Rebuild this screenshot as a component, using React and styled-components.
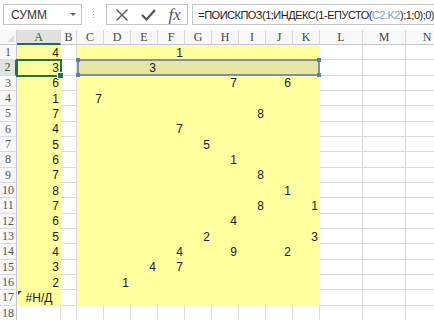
import React from "react";
import styled, { createGlobalStyle } from "styled-components";

const GlobalStyle = createGlobalStyle`
  html, body {
    margin: 0;
    padding: 0;
    background: #ffffff;
    overflow: hidden;
  }
  body {
    font-family: "Liberation Sans", Arial, sans-serif;
  }
`;

const YELLOW = "#ffff9e";
const RANGE = "#e6e6a2";
const GRID = "#dadada";
const GREEN = "#217346";

const Window = styled.div`
  width: 434px;
  height: 320px;
  overflow: hidden;
  background: #fff;
`;

const Toolbar = styled.div`
  height: 30px;
  display: flex;
  align-items: flex-start;
  padding: 4px 0 0 3px;
  box-sizing: border-box;
`;

const NameBox = styled.div`
  width: 79px;
  height: 21px;
  box-sizing: border-box;
  border: 1px solid #c6c6c6;
  display: flex;
  align-items: center;
  justify-content: space-between;
  padding: 0 5px 0 7px;
  font-size: 12px;
  color: #333;
`;

const Caret = styled.span`
  width: 0;
  height: 0;
  border-left: 3px solid transparent;
  border-right: 3px solid transparent;
  border-top: 3px solid #666;
`;

const Grip = styled.div`
  width: 24px;
  height: 21px;
  display: flex;
  flex-direction: column;
  align-items: center;
  justify-content: center;
  gap: 2px;

  span {
    width: 1px;
    height: 1px;
    background: #9a9a9a;
  }
`;

const FxGroup = styled.div`
  width: 83px;
  height: 21px;
  box-sizing: border-box;
  border: 1px solid #c6c6c6;
  display: flex;
  align-items: center;
  padding-left: 8px;
  gap: 12px;
`;

const FxLabel = styled.span`
  font-family: "Liberation Serif", "DejaVu Serif", serif;
  font-style: italic;
  font-size: 17px;
  color: #555;
  line-height: 1;
  margin-left: 1px;
`;

const FormulaBox = styled.div`
  flex: 1;
  height: 21px;
  margin-left: 4px;
  box-sizing: border-box;
  border: 1px solid #c6c6c6;
  border-right: none;
  display: flex;
  align-items: center;
  padding-left: 5px;
  font-size: 11px;
  letter-spacing: -0.5px;
  color: #222;
  white-space: nowrap;
`;

const Ref = styled.span`
  color: #7f9fd2;
`;

const Sheet = styled.div`
  display: grid;
  grid-template-columns: 17px 44px 16px repeat(9, 27px) 43px 43px 43px;
  grid-template-rows: 15px repeat(18, 15.333px);
  position: relative;
`;

const Corner = styled.div`
  box-sizing: border-box;
  background: #f8f8f8;
  border-right: 1px solid #d4d4d4;
  border-bottom: 1px solid #c6c6c6;
  position: relative;

  &::after {
    content: "";
    position: absolute;
    right: 2px;
    bottom: 2px;
    border-left: 7px solid transparent;
    border-bottom: 7px solid #dcdcdc;
  }
`;

const ColHead = styled.div`
  box-sizing: border-box;
  background: ${(p) => (p.$active ? "#e1e1e1" : "#f8f8f8")};
  border-right: 1px solid #dadada;
  border-bottom: ${(p) => (p.$active ? `2px solid ${GREEN}` : "1px solid #c6c6c6")};
  font-family: "Liberation Serif", "DejaVu Serif", serif;
  font-size: 12px;
  color: ${(p) => (p.$active ? "#1e5c3a" : "#444")};
  display: flex;
  align-items: center;
  justify-content: center;
  line-height: 1;
`;

const RowHead = styled.div`
  box-sizing: border-box;
  background: ${(p) => (p.$active ? "#e1e1e1" : "#f8f8f8")};
  border-right: ${(p) => (p.$active ? `2px solid ${GREEN}` : "1px solid #c6c6c6")};
  border-bottom: 1px solid #dadada;
  font-family: "Liberation Serif", "DejaVu Serif", serif;
  font-size: 12px;
  color: ${(p) => (p.$active ? "#1e5c3a" : "#555")};
  display: flex;
  align-items: center;
  justify-content: center;
  line-height: 1;
`;

const fills = { yellow: YELLOW, range: RANGE, white: "#ffffff" };

const Cell = styled.div`
  box-sizing: border-box;
  background: ${(p) => fills[p.$fill]};
  border-right: ${(p) => (p.$fill === "white" ? `1px solid ${GRID}` : "none")};
  border-bottom: ${(p) => (p.$fill === "white" ? `1px solid ${GRID}` : "none")};
  display: flex;
  align-items: center;
  justify-content: ${(p) => (p.$center ? "center" : "flex-end")};
  padding-right: ${(p) => (p.$center ? "0" : "2px")};
  font-size: 12px;
  color: #1a1a1a;
  line-height: 1;
  position: relative;
`;

const ErrorMark = styled.span`
  position: absolute;
  left: 1px;
  top: 1px;
  border-top: 4px solid #1e7145;
  border-right: 4px solid transparent;
`;

const ActiveCell = styled.div`
  grid-row: 3 / 4;
  grid-column: 2 / 3;
  position: absolute;
  inset: -1px -1px -1px -1px;
  border: 2px solid ${GREEN};
  pointer-events: none;
`;

const FillHandle = styled.span`
  position: absolute;
  right: -4px;
  bottom: -4px;
  width: 5px;
  height: 5px;
  background: ${GREEN};
  border: 1px solid #fff;
`;

const RangeBox = styled.div`
  grid-row: 3 / 4;
  grid-column: 4 / 13;
  position: absolute;
  inset: -1px 0 0 0;
  border: 2px solid #7d90a6;
  pointer-events: none;
`;

const Handle = styled.span`
  position: absolute;
  width: 4px;
  height: 4px;
  background: #5a7fb4;
  ${(p) => (p.$top ? "top: -3px;" : "bottom: -3px;")}
  ${(p) => (p.$left ? "left: -3px;" : "right: -3px;")}
`;

const COLS = ["A", "B", "C", "D", "E", "F", "G", "H", "I", "J", "K", "L", "M", "N"];

const colA = [4, 3, 6, 1, 7, 4, 5, 6, 7, 8, 7, 6, 5, 4, 3, 2, "#Н/Д"];

const grid = {
  1: { F: 1 },
  2: { E: 3 },
  3: { H: 7, J: 6 },
  4: { C: 7 },
  5: { I: 8 },
  6: { F: 7 },
  7: { G: 5 },
  8: { H: 1 },
  9: { I: 8 },
  10: { J: 1 },
  11: { I: 8, K: 1 },
  12: { H: 4 },
  13: { G: 2, K: 3 },
  14: { F: 4, H: 9, J: 2 },
  15: { E: 4, F: 7 },
  16: { D: 1 },
};

const yellowCols = ["C", "D", "E", "F", "G", "H", "I", "J", "K"];

function fillFor(row, col) {
  if (row > 17) return "white";
  if (col === "A") return "yellow";
  if (yellowCols.includes(col)) return row === 2 ? "range" : "yellow";
  return "white";
}

function valueFor(row, col) {
  if (col === "A") return colA[row - 1];
  return grid[row] ? grid[row][col] : undefined;
}

function XIcon() {
  return (
    <svg width="14" height="14" viewBox="0 0 14 14">
      <path d="M1.5 1.5 L12.5 12.5 M12.5 1.5 L1.5 12.5" stroke="#555" strokeWidth="1.4" fill="none" />
    </svg>
  );
}

function CheckIcon() {
  return (
    <svg width="15" height="13" viewBox="0 0 15 13">
      <path d="M1 7 L5.5 11.5 L14 2" stroke="#555" strokeWidth="2.2" fill="none" />
    </svg>
  );
}

export default function App() {
  const rows = [];
  for (let r = 1; r <= 18; r++) {
    rows.push(
      <RowHead key={`h${r}`} $active={r === 2}>
        {r}
      </RowHead>
    );
    COLS.forEach((c) => {
      const v = valueFor(r, c);
      const isErr = r === 17 && c === "A";
      rows.push(
        <Cell key={`${c}${r}`} $fill={fillFor(r, c)} $center={isErr}>
          {isErr && <ErrorMark />}
          {v}
        </Cell>
      );
    });
  }

  return (
    <Window>
      <GlobalStyle />
      <Toolbar>
        <NameBox>
          СУММ
          <Caret />
        </NameBox>
        <Grip>
          <span />
          <span />
          <span />
        </Grip>
        <FxGroup>
          <XIcon />
          <CheckIcon />
          <FxLabel>fx</FxLabel>
        </FxGroup>
        <FormulaBox>
          =ПОИСКПОЗ(1;ИНДЕКС(1-ЕПУСТО(<Ref>C2:K2</Ref>);1;0);0)
        </FormulaBox>
      </Toolbar>
      <Sheet>
        <Corner />
        {COLS.map((c) => (
          <ColHead key={c} $active={c === "A"}>
            {c}
          </ColHead>
        ))}
        {rows}
        <RangeBox>
          <Handle $top $left />
          <Handle $top />
          <Handle $left />
          <Handle />
        </RangeBox>
        <ActiveCell>
          <FillHandle />
        </ActiveCell>
      </Sheet>
    </Window>
  );
}
